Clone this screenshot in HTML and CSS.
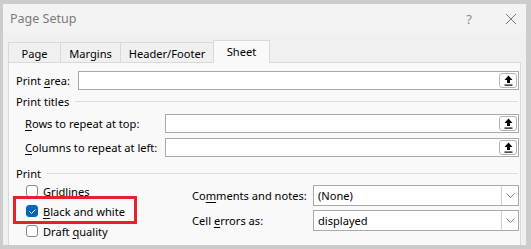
FILE: index.html
```html
<!DOCTYPE html>
<html>
<head>
<meta charset="utf-8">
<link rel="stylesheet" href="styles.css">
</head>
<body>
<div class="window">
  <div class="titlebar">
    <span class="title">Page Setup</span>
    <span class="help">?</span>
    <svg class="close" width="12" height="12" viewBox="0 0 12 12"><path d="M1 1L11 11M11 1L1 11" stroke="#7a7a7a" stroke-width="1"/></svg>
  </div>
  <div class="tabs">
    <div class="tab t-page">Page</div>
    <div class="tab t-margins">Margins</div>
    <div class="tab t-hf">Header/Footer</div>
    <div class="tab active t-sheet">Sheet</div>
  </div>
  <div class="panel">
    <div class="row area-row">
      <label class="lbl area-lbl">Print <u>a</u>rea:</label>
      <div class="input">
        <span class="refbtn"><svg width="9" height="11" viewBox="0 0 9 11"><path d="M4.5 0.5L8.5 5H6V8H3V5H0.5Z" fill="#000"/><rect x="0.5" y="9.5" width="8" height="1.2" fill="#000"/></svg></span>
      </div>
    </div>
    <div class="group"><span>Print titles</span><span class="sep"></span></div>
    <div class="row sub-row rows-row">
      <label class="lbl sub-lbl"><u>R</u>ows to repeat at top:</label>
      <div class="input">
        <span class="refbtn"><svg width="9" height="11" viewBox="0 0 9 11"><path d="M4.5 0.5L8.5 5H6V8H3V5H0.5Z" fill="#000"/><rect x="0.5" y="9.5" width="8" height="1.2" fill="#000"/></svg></span>
      </div>
    </div>
    <div class="row sub-row cols-row">
      <label class="lbl sub-lbl"><u>C</u>olumns to repeat at left:</label>
      <div class="input">
        <span class="refbtn"><svg width="9" height="11" viewBox="0 0 9 11"><path d="M4.5 0.5L8.5 5H6V8H3V5H0.5Z" fill="#000"/><rect x="0.5" y="9.5" width="8" height="1.2" fill="#000"/></svg></span>
      </div>
    </div>
    <div class="group print-group"><span>Print</span><span class="sep"></span></div>
    <div class="print-body">
      <div class="checks">
        <div class="check"><span class="box"></span><span><u>G</u>ridlines</span></div>
        <div class="check checked"><span class="box"><svg width="9" height="7" viewBox="0 0 9 7"><path d="M1.5 3.5L3.5 5.5L7.5 1.5" stroke="#fff" stroke-width="1" fill="none"/></svg></span><span><u>B</u>lack and white</span></div>
        <div class="check"><span class="box"></span><span>Draft <u>q</u>uality</span></div>
        <div class="check"><span class="box"></span></div>
        <div class="highlight"></div>
      </div>
      <div class="selects">
        <div class="srow">
          <label class="lbl">Co<u>m</u>ments and notes:</label>
          <div class="select"><span>(None)</span><span class="drop"><svg width="9" height="5" viewBox="0 0 9 5"><path d="M0.5 0.5L4.5 4.5L8.5 0.5" stroke="#808080" fill="none"/></svg></span></div>
        </div>
        <div class="srow">
          <label class="lbl">Cell <u>e</u>rrors as:</label>
          <div class="select"><span>displayed</span><span class="drop"><svg width="9" height="5" viewBox="0 0 9 5"><path d="M0.5 0.5L4.5 4.5L8.5 0.5" stroke="#808080" fill="none"/></svg></span></div>
        </div>
      </div>
    </div>
  </div>
</div>
</body>
</html>
```
FILE: styles.css
```css
html, body {
  margin: 0;
  padding: 0;
}
body {
  width: 531px;
  height: 249px;
  background: #cccccc;
  overflow: hidden;
  font-family: "Noto Sans", "Open Sans", sans-serif;
  font-size: 11.1px;
  color: #000;
}
u { text-decoration-thickness: 1px; text-underline-offset: 2px; }
.window {
  margin: 4px 5px 0 3px;
  height: 241px;
  background: #f0f0f0;
  display: flex;
  flex-direction: column;
  overflow: hidden;
}
.titlebar {
  height: 29px;
  flex: none;
  background: #f3f3f3;
  display: flex;
  align-items: center;
  padding-left: 7px;
  color: #7a7a7a;
  font-size: 12.5px;
}
.title { flex: 1; }
.help { font-size: 13px; margin-right: 33px; color: #8a8a8a; }
.close { margin-right: 9px; }
.tabs {
  margin-top: 7px;
  padding-left: 5px;
  display: flex;
  align-items: flex-end;
  height: 22px;
  flex: none;
}
.tab {
  height: 20px;
  box-sizing: border-box;
  border: 1px solid #d9d9d9;
  border-bottom: none;
  border-right: none;
  display: flex;
  align-items: center;
  justify-content: center;
  padding-top: 2px;
}
.t-page { width: 52px; }
.t-margins { width: 60px; }
.t-hf { width: 93px; }
.t-sheet { width: 57px; }
.tab.active {
  background: #f9f9f9;
  border-right: 1px solid #d9d9d9;
  margin-bottom: -1px;
  height: 23px;
  position: relative;
  z-index: 1;
  padding-bottom: 3px;
}
.panel {
  margin: 0 5px 0 5px;
  border: 1px solid #d9d9d9;
  border-bottom: none;
  background: #f9f9f9;
  flex: 1;
  padding: 0 1px 0 7px;
  overflow: hidden;
}
.row {
  display: flex;
  align-items: center;
}
.area-row { margin-top: 8px; }
.area-lbl { width: 62px; flex: none; }
.input {
  flex: 1;
  height: 19px;
  box-sizing: border-box;
  border: 1px solid #a8a8a8;
  background: #fff;
  display: flex;
  justify-content: flex-end;
  align-items: center;
  padding-right: 1px;
}
.refbtn {
  width: 18px;
  height: 15px;
  box-sizing: border-box;
  border: 1px solid #b4b4b4;
  border-radius: 3px;
  display: flex;
  align-items: center;
  justify-content: center;
  background: #fff;
}
.group {
  display: flex;
  align-items: center;
  height: 16px;
  margin-top: 3px;
}
.sep {
  flex: 1;
  height: 1px;
  background: #dcdcdc;
  margin-left: 6px;
  margin-right: 1px;
}
.sub-row { padding-left: 9px; }
.sub-lbl { width: 140px; flex: none; }
.rows-row { margin-top: 5px; }
.cols-row { margin-top: 5px; }
.print-group { margin-top: 8px; }
.print-body {
  display: flex;
}
.checks {
  position: relative;
  width: 176px;
  box-sizing: border-box;
  flex: none;
  padding-left: 10px;
  padding-top: 0;
}
.check {
  display: flex;
  align-items: center;
  height: 20px;
}
.box {
  width: 12px;
  height: 12px;
  box-sizing: border-box;
  border: 1px solid #8a8a8a;
  border-radius: 3px;
  background: #fff;
  margin-right: 5px;
  display: flex;
  align-items: center;
  justify-content: center;
}
.checked .box {
  background: #0067c0;
  border-color: #0067c0;
}
.highlight {
  position: absolute;
  left: -3px;
  top: 15px;
  width: 124px;
  height: 28px;
  box-sizing: border-box;
  border: 3px solid #e2232a;
}
.selects {
  flex: 1;
  padding-top: 4px;
}
.srow {
  display: flex;
  align-items: center;
  margin-bottom: 4px;
}
.srow .lbl { width: 121px; flex: none; }
.select {
  flex: 1;
  height: 21px;
  box-sizing: border-box;
  border: 1px solid #a8a8a8;
  background: #fff;
  display: flex;
  align-items: center;
  padding-left: 4px;
}
.select span:first-child { flex: 1; }
.drop {
  width: 16px;
  height: 19px;
  border-left: 1px solid #d0d0d0;
  display: flex;
  align-items: center;
  justify-content: center;
}
```
